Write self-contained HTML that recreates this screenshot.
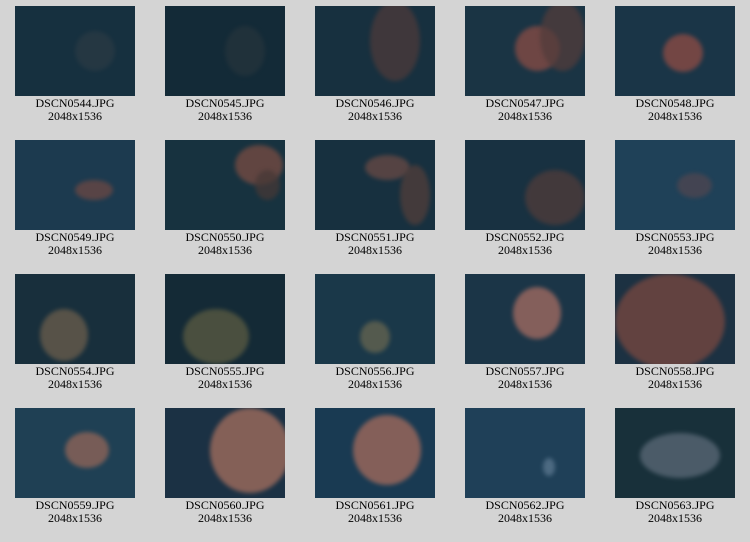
<!DOCTYPE html><html><head><style>
body{margin:0;width:750px;height:542px;background:#d4d4d4;position:relative;overflow:hidden;font-family:"Liberation Serif",serif;font-size:12px;color:#000}
.c{position:absolute;width:150px;text-align:center;line-height:13px}
.t{width:120px;height:90px;margin:6px auto 0;position:relative;overflow:hidden;background:#173246}
.j{position:absolute;border-radius:50%;opacity:.75;filter:blur(2px)}
.l{margin-top:1px}
</style></head><body>
<script>
var d=[
['#16303f',[[60,25,40,40,'#2a3a44']]],['#132a37',[[60,20,40,50,'#25343c']]],['#17303f',[[55,-5,50,80,'#4d3a3a']]],['#1a3444',[[50,20,45,45,'#8a4c44'],[75,-5,45,70,'#523c3b']]],['#1a3547',[[48,28,40,38,'#914c44']]],
['#1c3a4f',[[60,40,38,20,'#6d4843']]],['#17323f',[[70,5,48,40,'#7a4c42'],[90,30,25,30,'#463836']]],['#17303f',[[50,15,45,25,'#6a4a45'],[85,25,30,60,'#523e3a']]],['#183141',[[60,30,60,55,'#503c3a']]],['#1f4158',[[62,33,35,25,'#504650']]],
['#182f3c',[[25,35,48,52,'#6c5e4c']]],['#142a36',[[18,35,66,55,'#5c5c42']]],['#1a3849',[[45,47,30,32,'#686650']]],['#1b3547',[[48,13,48,52,'#a86d62']]],['#1c3142',[[0,0,110,95,'#7a4840']]],
['#1f4054',[[50,24,44,36,'#956658']]],['#1b3144',[[45,0,80,85,'#a8705e']]],['#193a52',[[38,7,68,70,'#a86c5c']]],['#1f4058',[[78,50,12,18,'#5c7890']]],['#18303a',[[25,25,80,45,'#5c6a78']]]
];
var h='';
for(var i=0;i<20;i++){var r=Math.floor(i/5),c=i%5;var x=c*150,y=r*134;
var s='';d[i][1].forEach(function(j){s+='<div class="j" style="left:'+j[0]+'px;top:'+j[1]+'px;width:'+j[2]+'px;height:'+j[3]+'px;background:'+j[4]+'"></div>'});
h+='<div class="c" style="left:'+x+'px;top:'+y+'px"><div class="t" style="background:'+d[i][0]+'">'+s+'</div><div class="l">DSCN'+(544+i).toString().padStart(4,'0')+'.JPG<br>2048x1536</div></div>';}
document.write(h);
</script>
</body></html>
